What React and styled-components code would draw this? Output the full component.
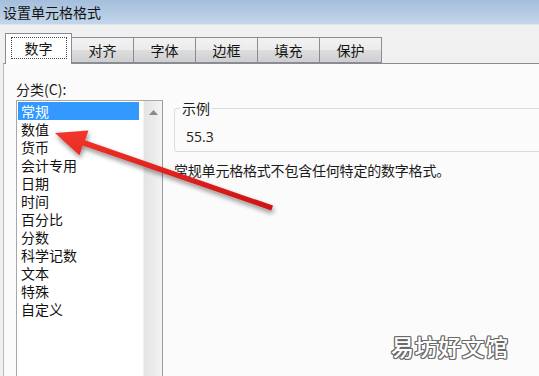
import React from "react";
import styled, { createGlobalStyle } from "styled-components";

const Global = createGlobalStyle`
  html, body { margin: 0; padding: 0; background: #f0f0f0; overflow: hidden; }
  #root { width: 539px; height: 376px; }
`;

const FONT = `"Noto Sans CJK SC", "Microsoft YaHei", sans-serif`;

const Window = styled.div`
  position: relative;
  width: 539px;
  height: 376px;
  display: flex;
  flex-direction: column;
  background: #f0f0f0;
  font-family: ${FONT};
  color: #1a1a1a;
  overflow: hidden;
`;

const TitleBar = styled.div`
  height: 24px;
  flex: none;
  display: flex;
  align-items: center;
  padding-left: 3px;
  font-size: 14px;
  line-height: 24px;
  color: #141414;
  background: linear-gradient(#a4bedb, #c3d6ea);
  border-bottom: 1px solid #dbe6f1;
`;

const TabStrip = styled.div`
  flex: none;
  display: flex;
  align-items: flex-end;
  height: 30px;
  margin-top: 8px;
  padding-left: 5px;
  position: relative;
  z-index: 1;
`;

const Tab = styled.div`
  box-sizing: border-box;
  display: flex;
  align-items: center;
  justify-content: center;
  font-size: 14px;
  line-height: 18px;
  color: #141414;
  border: 1px solid #898c95;
  border-left-width: ${(p) => (p.$first ? "1px" : "0")};
  ${(p) =>
    p.$active
      ? `
    width: 67px;
    height: 31px;
    margin-bottom: -1px;
    background: #ffffff;
    border-bottom: none;
  `
      : `
    width: 62px;
    height: 26px;
    background: linear-gradient(#f2f2f2 0%, #ebebeb 50%, #dddddd 51%, #cfcfcf 100%);
  `}
`;

const FocusText = styled.span`
  display: flex;
  align-items: center;
  justify-content: center;
  width: 56px;
  height: 22px;
  box-sizing: border-box;
  border: 1px dotted #444;
  margin-top: -3px;
`;

const Panel = styled.div`
  flex: 1;
  position: relative;
  margin-left: 3px;
  background: #fbfbfb;
  border-top: 1px solid #898c95;
  border-left: 1px solid #b9b9b9;
  padding: 16px 0 0 12px;
  display: grid;
  grid-template-columns: 147px 1fr;
  column-gap: 11px;
`;

const LeftCol = styled.div`
  display: flex;
  flex-direction: column;
`;

const Label = styled.div`
  font-size: 14px;
  line-height: 18px;
  height: 20px;
`;

const ListBox = styled.div`
  display: flex;
  border: 1px solid #a8a8a8;
  border-right-color: #9a9a9a;
  border-bottom: none;
  background: #ffffff;
  height: 300px;
  box-sizing: border-box;
`;

const Items = styled.ul`
  list-style: none;
  margin: 0;
  padding: 1px 0 0 1px;
  flex: 1;
`;

const Item = styled.li`
  height: 18px;
  width: 121px;
  padding-left: 3px;
  box-sizing: border-box;
  font-size: 14px;
  line-height: 18px;
  white-space: nowrap;
  color: ${(p) => (p.$selected ? "#ffffff" : "#111")};
  background: ${(p) => (p.$selected ? "#3399ff" : "transparent")};
`;

const ScrollBar = styled.div`
  width: 18px;
  flex: none;
  display: flex;
  flex-direction: column;
  align-items: center;
  background: linear-gradient(90deg, #e4e4e4, #ececec 60%, #f4f4f4);
  border-left: 1px solid #f2f2f2;
  padding-top: 9px;
`;

const RightCol = styled.div`
  display: flex;
  flex-direction: column;
  padding-top: 28px;
`;

const Group = styled.div`
  position: relative;
  height: 44px;
  margin-right: -20px;
  border: 1px solid #d6dbe0;
  border-radius: 3px;
  box-sizing: border-box;
  padding: 18px 0 0 11px;
`;

const Legend = styled.span`
  position: absolute;
  top: -10px;
  left: 5px;
  padding: 0 2px;
  background: #fbfbfb;
  font-size: 14px;
  line-height: 18px;
`;

const Sample = styled.div`
  font-family: "Open Sans", "DejaVu Sans", sans-serif;
  font-size: 14px;
  line-height: 20px;
  color: #222;
`;

const Description = styled.div`
  margin-top: 9px;
  font-size: 14px;
  line-height: 18px;
  letter-spacing: -0.2px;
  white-space: nowrap;
`;

const ArrowLayer = styled.svg`
  position: absolute;
  left: 0;
  top: 0;
  pointer-events: none;
`;

const Watermark = styled.div`
  position: absolute;
  left: 391px;
  top: 329px;
  font-family: ${FONT};
  font-size: 23px;
  font-weight: 500;
  letter-spacing: 0.5px;
  color: #ffffff;
  text-shadow: 1px 0 0 #6a6a6a, -1px 0 0 #6a6a6a, 0 1px 0 #6a6a6a, 0 -1px 0 #6a6a6a,
    1px 1px 0 #6a6a6a, -1px -1px 0 #6a6a6a, 1px -1px 0 #6a6a6a, -1px 1px 0 #6a6a6a;
`;

const tabs = ["数字", "对齐", "字体", "边框", "填充", "保护"];
const cats = ["常规", "数值", "货币", "会计专用", "日期", "时间", "百分比", "分数", "科学记数", "文本", "特殊", "自定义"];

export default function App() {
  return (
    <>
      <Global />
      <Window>
        <TitleBar>设置单元格格式</TitleBar>
        <TabStrip>
          {tabs.map((t, i) => (
            <Tab key={t} $active={i === 0} $first={i === 0}>
              {i === 0 ? <FocusText>{t}</FocusText> : t}
            </Tab>
          ))}
        </TabStrip>
        <Panel>
          <LeftCol>
            <Label>分类(C):</Label>
            <ListBox>
              <Items>
                {cats.map((c, i) => (
                  <Item key={c} $selected={i === 0}>{c}</Item>
                ))}
              </Items>
              <ScrollBar>
                <svg width="9" height="5" viewBox="0 0 9 5">
                  <path d="M0 5 L4.5 0 L9 5 Z" fill="#8a8a8a" />
                </svg>
              </ScrollBar>
            </ListBox>
          </LeftCol>
          <RightCol>
            <Group>
              <Legend>示例</Legend>
              <Sample>55.3</Sample>
            </Group>
            <Description>常规单元格格式不包含任何特定的数字格式。</Description>
          </RightCol>
        </Panel>
        <ArrowLayer width="539" height="376" viewBox="0 0 539 376">
          <defs>
            <filter id="sh" x="-20%" y="-20%" width="140%" height="160%">
              <feGaussianBlur in="SourceAlpha" stdDeviation="2.4" />
              <feOffset dx="1" dy="3" result="b" />
              <feComponentTransfer>
                <feFuncA type="linear" slope="0.45" />
              </feComponentTransfer>
              <feMerge>
                <feMergeNode />
                <feMergeNode in="SourceGraphic" />
              </feMerge>
            </filter>
            <linearGradient id="rg" x1="0" y1="0" x2="0" y2="1">
              <stop offset="0" stopColor="#f2362b" />
              <stop offset="1" stopColor="#cc1212" />
            </linearGradient>
          </defs>
          <g filter="url(#sh)">
            <path
              d="M273 205.6 L85 140.3 L88.5 130.5 L55 133 L79.5 155.3 L82.6 145.5 L271.3 210.4 Z"
              fill="url(#rg)"
            />
          </g>
        </ArrowLayer>
        <Watermark>易坊好文馆</Watermark>
      </Window>
    </>
  );
}
